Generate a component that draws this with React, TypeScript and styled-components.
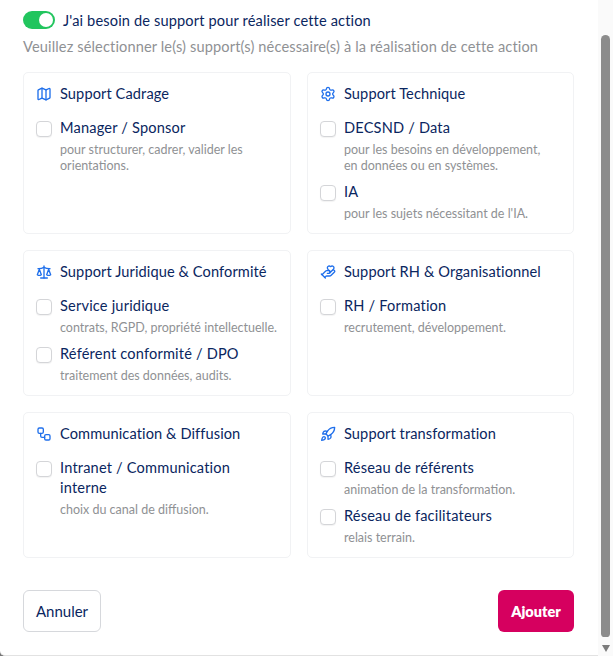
import React, { useState } from "react";
import styled, { createGlobalStyle } from "styled-components";
import { Map, Settings, Scale, HandHeart, Workflow, Rocket, LucideIcon } from "lucide-react";

const GlobalStyle = createGlobalStyle`
  html, body {
    margin: 0;
    height: 100%;
    overflow: hidden;
    background: #ffffff;
  }
  * {
    box-sizing: border-box;
  }
`;

const Page = styled.div`
  display: flex;
  width: 613px;
  height: 656px;
  background: #777777;
  font-family: "Lato", "Open Sans", sans-serif;
  color: #0a2660;
`;

const Content = styled.div`
  flex: 1;
  min-width: 0;
  padding: 10px 24px 0 23px;
  background: #ffffff;
  border-bottom: 1px solid #e2e2e2;
  border-bottom-left-radius: 5px;
`;

const SwitchRow = styled.label`
  display: flex;
  align-items: center;
  gap: 8px;
  height: 20px;
  font-size: 14.6px;
  letter-spacing: 0.14px;
  cursor: pointer;
`;

const Track = styled.span<{ $on: boolean }>`
  display: flex;
  align-items: center;
  justify-content: ${(props) => (props.$on ? "flex-end" : "flex-start")};
  width: 32px;
  height: 18px;
  padding: 2px;
  border-radius: 9px;
  background: ${(props) => (props.$on ? "#22c55e" : "#d1d5db")};
`;

const Knob = styled.span`
  width: 14px;
  height: 14px;
  border-radius: 50%;
  background: #ffffff;
`;

const Intro = styled.p`
  margin: 7px 0 15px;
  font-size: 14.6px;
  letter-spacing: 0.13px;
  line-height: 20px;
  color: #8f9194;
`;

const Grid = styled.div`
  display: grid;
  grid-template-columns: 268px 267px;
  gap: 16px;
`;

const Card = styled.section`
  padding: 11px 12px;
  background: #ffffff;
  border: 1px solid #f1f2f4;
  border-radius: 5px;
`;

const CardTitle = styled.h3`
  display: flex;
  align-items: center;
  gap: 8px;
  margin: 0 0 14px;
  font-size: 14.6px;
  letter-spacing: 0.1px;
  line-height: 20px;
  font-weight: 400;
  color: #0a2660;

  svg {
    flex: none;
    color: #1f6feb;
  }
`;

const Item = styled.div`
  display: grid;
  grid-template-columns: 16px 1fr;
  column-gap: 8px;

  & + & {
    margin-top: 8px;
  }
`;

const Box = styled.span<{ $checked: boolean }>`
  width: 16px;
  height: 16px;
  margin-top: 3px;
  border: 1px solid #d4d5d8;
  border-radius: 4px;
  background: ${(props) => (props.$checked ? "#1f6feb" : "#ffffff")};
  box-shadow: 0 1px 1px rgba(0, 0, 0, 0.05);
  cursor: pointer;
`;

const ItemLabel = styled.div`
  font-size: 14.6px;
  letter-spacing: 0.18px;
  line-height: 20px;
`;

const ItemHint = styled.div`
  grid-column: 2;
  margin-top: 4px;
  font-size: 12.5px;
  line-height: 16px;
  color: #8f9194;
  white-space: pre-line;
`;

const Actions = styled.div`
  display: flex;
  justify-content: space-between;
  margin-top: 32px;
`;

const CancelButton = styled.button`
  width: 78px;
  height: 42px;
  border: 1px solid #d6d8dc;
  border-radius: 6px;
  background: #ffffff;
  color: #0a2660;
  font: 400 15px "Lato", sans-serif;
`;

const SubmitButton = styled.button`
  width: 76px;
  height: 42px;
  border: 0;
  border-radius: 6px;
  background: #d6005f;
  color: #ffffff;
  font: 800 14.5px "Lato", sans-serif;
`;

const ScrollTrack = styled.div`
  display: flex;
  flex: none;
  flex-direction: column;
  align-items: center;
  width: 15px;
  padding: 35px 0 4px;
  background: #fafafa;
`;

const ScrollThumb = styled.div`
  width: 9px;
  height: 602px;
  border-radius: 5px 5px 4px 4px;
  background: #8c8c8c;
`;

const ScrollArrow = styled.div`
  width: 0;
  height: 0;
  margin-top: 8px;
  border-left: 4.5px solid transparent;
  border-right: 4.5px solid transparent;
  border-top: 7px solid #7b7b7b;
`;

interface Option {
  label: string;
  hint: string;
}

interface Group {
  title: string;
  icon: LucideIcon;
  options: Option[];
}

const groups: Group[] = [
  {
    title: "Support Cadrage",
    icon: Map,
    options: [
      { label: "Manager / Sponsor", hint: "pour structurer, cadrer, valider les\norientations." },
    ],
  },
  {
    title: "Support Technique",
    icon: Settings,
    options: [
      { label: "DECSND / Data", hint: "pour les besoins en développement,\nen données ou en systèmes." },
      { label: "IA", hint: "pour les sujets nécessitant de l'IA." },
    ],
  },
  {
    title: "Support Juridique & Conformité",
    icon: Scale,
    options: [
      { label: "Service juridique", hint: "contrats, RGPD, propriété intellectuelle." },
      { label: "Référent conformité / DPO", hint: "traitement des données, audits." },
    ],
  },
  {
    title: "Support RH & Organisationnel",
    icon: HandHeart,
    options: [{ label: "RH / Formation", hint: "recrutement, développement." }],
  },
  {
    title: "Communication & Diffusion",
    icon: Workflow,
    options: [{ label: "Intranet / Communication interne", hint: "choix du canal de diffusion." }],
  },
  {
    title: "Support transformation",
    icon: Rocket,
    options: [
      { label: "Réseau de référents", hint: "animation de la transformation." },
      { label: "Réseau de facilitateurs", hint: "relais terrain." },
    ],
  },
];

const App: React.FC = () => {
  const [enabled, setEnabled] = useState(true);
  const [checked, setChecked] = useState<string[]>([]);

  const toggle = (label: string) => {
    setChecked((prev) =>
      prev.includes(label) ? prev.filter((l) => l !== label) : [...prev, label]
    );
  };

  return (
    <Page>
      <GlobalStyle />
      <Content>
        <SwitchRow onClick={() => setEnabled(!enabled)}>
          <Track $on={enabled}>
            <Knob />
          </Track>
          J'ai besoin de support pour réaliser cette action
        </SwitchRow>
        <Intro>Veuillez sélectionner le(s) support(s) nécessaire(s) à la réalisation de cette action</Intro>
        <Grid>
          {groups.map((group) => (
            <Card key={group.title}>
              <CardTitle>
                <group.icon size={16} strokeWidth={2} />
                {group.title}
              </CardTitle>
              {group.options.map((option) => (
                <Item key={option.label}>
                  <Box $checked={checked.includes(option.label)} onClick={() => toggle(option.label)} />
                  <ItemLabel>{option.label}</ItemLabel>
                  <ItemHint>{option.hint}</ItemHint>
                </Item>
              ))}
            </Card>
          ))}
        </Grid>
        <Actions>
          <CancelButton>Annuler</CancelButton>
          <SubmitButton>Ajouter</SubmitButton>
        </Actions>
      </Content>
      <ScrollTrack>
        <ScrollThumb />
        <ScrollArrow />
      </ScrollTrack>
    </Page>
  );
};

export default App;
